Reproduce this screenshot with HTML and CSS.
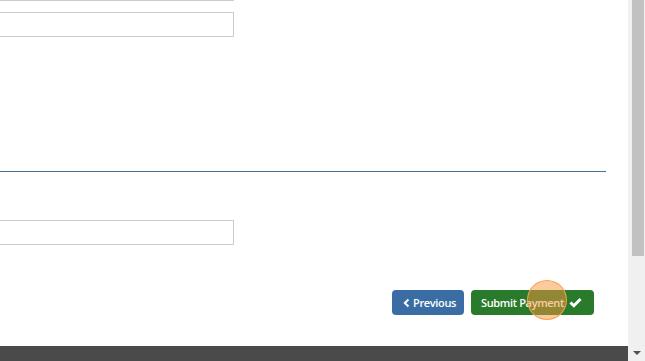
FILE: index.html
```html
<!DOCTYPE html>
<html>
<head>
<meta charset="utf-8">
<link rel="stylesheet" href="styles.css">
</head>
<body>
<div class="page">
  <div class="main">
    <div class="content">
      <div class="edge"></div>
      <div class="field"></div>
      <div class="rule"></div>
      <div class="field field-low"></div>
      <div class="actions">
        <button class="btn btn-prev"><svg class="ico" viewBox="0 0 10 12" width="7" height="10"><path d="M7.8 1 L2.6 6 L7.8 11" fill="none" stroke="#fff" stroke-width="2.8"/></svg>Previous</button>
        <button class="btn btn-submit">Submit Payment<svg class="ico ico-check" viewBox="0 0 14 12" width="13" height="11"><path d="M1.5 6 L5.2 9.6 L12.5 2.2" fill="none" stroke="#fff" stroke-width="3.2"/></svg>
          <span class="cursor"></span>
        </button>
      </div>
    </div>
    <div class="footer"></div>
  </div>
  <div class="scrollbar">
    <div class="thumb"></div>
    <div class="track"></div>
    <div class="arrow"></div>
  </div>
</div>
</body>
</html>
```
FILE: styles.css
```css
html, body {
  margin: 0;
  padding: 0;
  background: #fff;
  font-family: "Open Sans", "Liberation Sans", sans-serif;
}
.page {
  display: flex;
  width: 645px;
  height: 361px;
  overflow: hidden;
}
.main {
  width: 628px;
  display: flex;
  flex-direction: column;
}
.content {
  flex: 1;
  display: flex;
  flex-direction: column;
}
.edge {
  width: 234px;
  height: 1px;
  background: #ccc;
}
.field {
  width: 233px;
  height: 23px;
  border: 1px solid #ccc;
  border-left: none;
  margin-top: 11px;
}
.rule {
  width: 606px;
  height: 1px;
  background: #44708f;
  margin-top: 134px;
}
.field-low {
  margin-top: 48px;
}
.actions {
  display: flex;
  justify-content: flex-end;
  gap: 7px;
  margin-top: 45px;
  padding-right: 34px;
}
.btn {
  position: relative;
  height: 25px;
  border: none;
  border-radius: 4px;
  color: #fff;
  font-family: "Open Sans", "Liberation Sans", sans-serif;
  font-size: 11px;
  font-weight: 600;
  letter-spacing: -0.35px;
  display: flex;
  align-items: center;
  padding: 0;
}
.btn-prev {
  width: 72px;
  background: #3a6da4;
  padding-left: 11px;
  gap: 3px;
}
.btn-submit {
  width: 123px;
  background: #2a7a2b;
  padding-left: 10px;
  gap: 5px;
}
.ico-check {
  margin-left: 0;
}
.cursor {
  position: absolute;
  left: 56px;
  top: -10px;
  width: 40px;
  height: 40px;
  border-radius: 50%;
  background: rgba(250, 150, 60, 0.5);
  border: 1.5px solid rgba(248, 160, 90, 0.95);
  box-sizing: border-box;
}
.footer {
  height: 15px;
  background: #4a4a4a;
}
.scrollbar {
  width: 17px;
  background: #f0f0f0;
  display: flex;
  flex-direction: column;
  align-items: center;
}
.thumb {
  width: 12px;
  height: 256px;
  background: #c1c1c1;
  margin-left: 2px;
}
.track {
  flex: 1;
}
.arrow {
  width: 0;
  height: 0;
  border-left: 4px solid transparent;
  border-right: 4px solid transparent;
  border-top: 4px solid #505050;
  margin-bottom: 6px;
}
```
